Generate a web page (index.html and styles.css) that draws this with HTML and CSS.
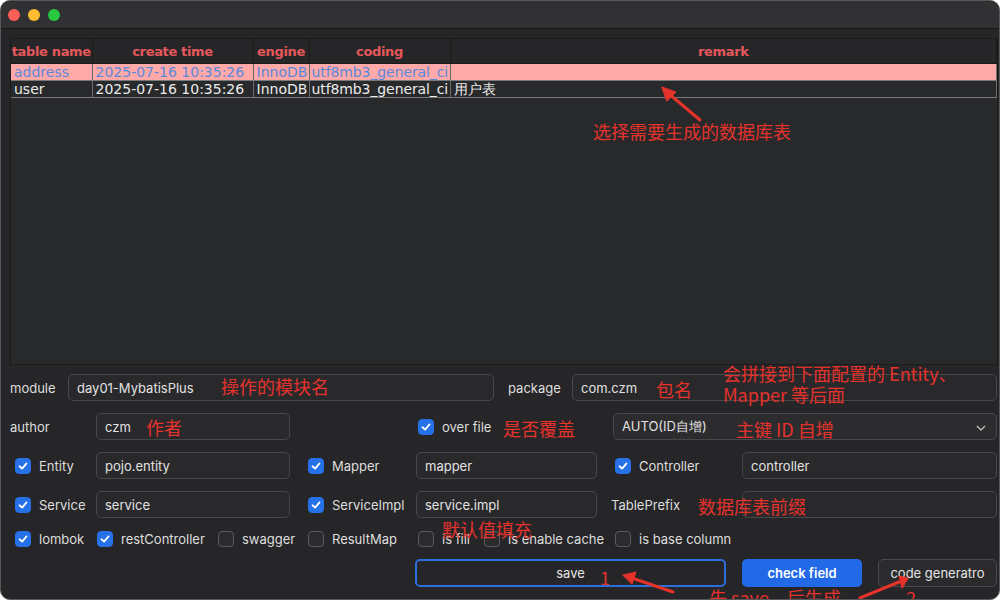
FILE: index.html
```html
<!DOCTYPE html>
<html>
<head>
<meta charset="utf-8">
<link rel="stylesheet" href="styles.css">
</head>
<body>
<div class="window">
  <div class="titlebar">
    <span class="light red"></span>
    <span class="light yellow"></span>
    <span class="light green"></span>
  </div>

  <div class="table-box">
    <table class="grid">
      <colgroup>
        <col class="c1"><col class="c2"><col class="c3"><col class="c4"><col>
      </colgroup>
      <thead>
        <tr><th>table name</th><th>create time</th><th>engine</th><th>coding</th><th>remark</th></tr>
      </thead>
      <tbody>
        <tr class="selected"><td>address</td><td>2025-07-16 10:35:26</td><td>InnoDB</td><td>utf8mb3_general_ci</td><td></td></tr>
        <tr><td>user</td><td>2025-07-16 10:35:26</td><td>InnoDB</td><td>utf8mb3_general_ci</td><td>用户表</td></tr>
      </tbody>
    </table>
  </div>

  <div class="form">
    <div class="row">
      <span class="lbl w-module">module</span>
      <div class="input w-426">day01-MybatisPlus</div>
      <span class="lbl w-package">package</span>
      <div class="input w-425">com.czm</div>
    </div>

    <div class="row">
      <span class="lbl w-86">author</span>
      <div class="input w-194">czm</div>
      <label class="check w-195 ml-128"><span class="box on"><svg viewBox="0 0 16 16"><polyline points="4,8.3 7,11 12,5" /></svg></span>over file</label>
      <div class="input select w-384">AUTO(ID自增)<svg class="chev" viewBox="0 0 10 6"><polyline points="1,1 5,5 9,1" /></svg></div>
    </div>

    <div class="row">
      <label class="check w-86 pl-5"><span class="box on"><svg viewBox="0 0 16 16"><polyline points="4,8.3 7,11 12,5" /></svg></span>Entity</label>
      <div class="input w-194">pojo.entity</div>
      <label class="check w-108 ml-18"><span class="box on"><svg viewBox="0 0 16 16"><polyline points="4,8.3 7,11 12,5" /></svg></span>Mapper</label>
      <div class="input w-181">mapper</div>
      <label class="check w-127 ml-18"><span class="box on"><svg viewBox="0 0 16 16"><polyline points="4,8.3 7,11 12,5" /></svg></span>Controller</label>
      <div class="input w-255">controller</div>
    </div>

    <div class="row">
      <label class="check w-86 pl-5"><span class="box on"><svg viewBox="0 0 16 16"><polyline points="4,8.3 7,11 12,5" /></svg></span>Service</label>
      <div class="input w-194">service</div>
      <label class="check w-108 ml-18"><span class="box on"><svg viewBox="0 0 16 16"><polyline points="4,8.3 7,11 12,5" /></svg></span>ServiceImpl</label>
      <div class="input w-181">service.impl</div>
      <span class="lbl w-131 ml-14">TablePrefix</span>
      <div class="input w-255"></div>
    </div>

    <div class="row row-checks">
      <label class="check w-87 pl-5"><span class="box on"><svg viewBox="0 0 16 16"><polyline points="4,8.3 7,11 12,5" /></svg></span>lombok</label>
      <label class="check w-121"><span class="box on"><svg viewBox="0 0 16 16"><polyline points="4,8.3 7,11 12,5" /></svg></span>restController</label>
      <label class="check w-90"><span class="box"></span>swagger</label>
      <label class="check w-110"><span class="box"></span>ResultMap</label>
      <label class="check w-66"><span class="box"></span>is fill</label>
      <label class="check w-131"><span class="box"></span>is enable cache</label>
      <label class="check"><span class="box"></span>is base column</label>
    </div>

    <div class="row row-buttons">
      <button class="btn btn-save">save</button>
      <button class="btn btn-primary">check field</button>
      <button class="btn btn-plain">code generatro</button>
    </div>
  </div>

  <span class="note n-table">选择需要生成的数据库表</span>
  <span class="note n-module">操作的模块名</span>
  <span class="note n-author">作者</span>
  <span class="note n-package">包名</span>
  <span class="note n-concat">会拼接到下面配置的 Entity、<br>Mapper 等后面</span>
  <span class="note n-over">是否覆盖</span>
  <span class="note n-key">主键 ID 自增</span>
  <span class="note n-prefix">数据库表前缀</span>
  <span class="note n-default">默认值填充</span>
  <span class="note n-one">1</span>
  <span class="note n-order">先 save，后生成</span>
  <span class="note n-two">2</span>

  <svg class="arrows" viewBox="0 0 1000 600">
    <g stroke="#e5322b" stroke-width="3" stroke-linecap="round" fill="#e5322b">
      <line x1="700" y1="120" x2="668" y2="93" />
      <polygon points="662,87 676,92 667,101" stroke-width="1"/>
      <line x1="673" y1="592" x2="632" y2="578" />
      <polygon points="623,575 636,572 632,584" stroke-width="1"/>
      <line x1="860" y1="598" x2="899" y2="582" />
      <polygon points="908,578 899,576 902,588" stroke-width="1"/>
    </g>
  </svg>
</div>
</body>
</html>
```

FILE: styles.css
```css
* { box-sizing: border-box; }

body {
  margin: 0;
  background: #ffffff;
  font-family: Inter, "Liberation Sans", sans-serif;
}

.window {
  position: relative;
  width: 1000px;
  height: 600px;
  background: #262628;
  border: 1px solid #58585b;
  border-radius: 10px;
  overflow: hidden;
  display: flex;
  flex-direction: column;
}

.titlebar {
  flex: none;
  height: 28px;
  background: #313133;
  border-bottom: 1px solid #161617;
  display: flex;
  align-items: center;
  gap: 8px;
  padding-left: 7px;
}

.light { width: 12px; height: 12px; border-radius: 50%; }
.red { background: #fe5f57; }
.yellow { background: #febc2e; }
.green { background: #28c840; }

.table-box {
  flex: none;
  margin: 9px 1px 0 9px;
  height: 327px;
  background: #28292b;
  border: 1px solid #1b1b1c;
}

.grid {
  width: 100%;
  border-collapse: collapse;
  table-layout: fixed;
  font-family: "DejaVu Sans", sans-serif;
}

.c1 { width: 81px; }
.c2 { width: 161px; }
.c3 { width: 56px; }
.c4 { width: 141px; }

.grid th {
  height: 24px;
  padding: 2px 0 0 0;
  font-size: 13px;
  font-weight: bold;
  letter-spacing: -0.35px;
  color: #e4585b;
  background: #262628;
  border-right: 1px solid #1b1b1c;
  border-bottom: 1px solid #1b1b1c;
  text-align: center;
  white-space: nowrap;
  overflow: hidden;
}

.grid td {
  height: 17px;
  padding: 0 0 0 3px;
  font-size: 14px;
  line-height: 16px;
  color: #ececec;
  border-right: 1px solid #6c6c6e;
  border-bottom: 1px solid #7a7a7c;
  white-space: nowrap;
  overflow: hidden;
}

.grid td:nth-child(4) { padding-left: 2px; letter-spacing: -0.1px; }

.grid tr.selected td {
  background: #ffa9a9;
  color: #5a88dc;
}

.form {
  flex: none;
  padding: 9px 1px 0 9px;
  font-size: 13px;
  color: #dedede;
}

.row {
  display: flex;
  align-items: center;
  height: 27px;
  margin-bottom: 12px;
}

.row-checks { height: 20px; margin-top: -1px; margin-bottom: 10px; }
.row-buttons { height: 28px; margin-bottom: 0; }

.lbl { flex: none; white-space: nowrap; }

.input {
  flex: none;
  height: 27px;
  background: #29292b;
  border: 1px solid #48484b;
  border-radius: 5px;
  padding-left: 8px;
  display: flex;
  align-items: center;
  color: #e2e2e2;
}

.select { position: relative; background: #2c2c2e; }
.chev {
  position: absolute;
  right: 10px;
  top: 11px;
  width: 10px;
  height: 6px;
  fill: none;
  stroke: #bdbdbd;
  stroke-width: 1.4;
}

.check {
  flex: none;
  display: flex;
  align-items: center;
  gap: 8px;
  white-space: nowrap;
}

.box {
  flex: none;
  width: 16px;
  height: 16px;
  border-radius: 4px;
  border: 1px solid #5b5b5f;
  background: #2b2b2d;
  display: flex;
}

.box.on { background: #2670e8; border-color: #2670e8; }
.box svg { width: 14px; height: 14px; fill: none; stroke: #ffffff; stroke-width: 2; stroke-linecap: round; stroke-linejoin: round; }

.w-module { width: 58px; }
.w-package { width: 64px; margin-left: 14px; }
.w-426 { width: 426px; }
.w-425 { width: 425px; }
.w-86 { width: 86px; }
.w-87 { width: 87px; }
.w-194 { width: 194px; }
.w-195 { width: 195px; }
.w-384 { width: 384px; }
.w-108 { width: 108px; }
.w-181 { width: 181px; }
.w-127 { width: 127px; }
.w-255 { width: 255px; }
.w-131 { width: 131px; }
.w-121 { width: 121px; }
.w-90 { width: 90px; }
.w-110 { width: 110px; }
.w-66 { width: 66px; }
.ml-128 { margin-left: 128px; }
.ml-18 { margin-left: 18px; }
.ml-14 { margin-left: 14px; }
.pl-5 { padding-left: 5px; }

.btn {
  flex: none;
  height: 28px;
  font-family: Inter, "Liberation Sans", sans-serif;
  font-size: 13px;
  border-radius: 5px;
  padding: 0;
}

.btn-save {
  margin-left: 405px;
  width: 311px;
  background: #262628;
  color: #e4e4e4;
  border: 2px solid #2a6fdc;
}

.btn-primary {
  margin-left: 16px;
  width: 120px;
  background: #2169e6;
  color: #ffffff;
  font-weight: 600;
  border: none;
}

.btn-plain {
  margin-left: 16px;
  width: 119px;
  background: #2b2b2d;
  color: #e4e4e4;
  border: 1px solid #4a4a4d;
}

.note {
  position: absolute;
  font-family: "Noto Sans CJK SC", "Noto Sans", sans-serif;
  font-size: 18px;
  line-height: 21px;
  color: #e5322b;
  white-space: nowrap;
}

.n-table { left: 592px; top: 120px; }
.n-module { left: 220px; top: 375px; }
.n-author { left: 145px; top: 416px; }
.n-package { left: 655px; top: 378px; }
.n-concat { left: 722px; top: 362px; }
.n-over { left: 502px; top: 417px; }
.n-key { left: 735px; top: 418px; }
.n-prefix { left: 697px; top: 495px; }
.n-default { left: 441px; top: 518px; }
.n-one { left: 599px; top: 566px; }
.n-order { left: 708px; top: 586px; }
.n-two { left: 905px; top: 586px; }

.arrows {
  position: absolute;
  left: -1px;
  top: -1px;
  width: 1000px;
  height: 600px;
  pointer-events: none;
}
```
